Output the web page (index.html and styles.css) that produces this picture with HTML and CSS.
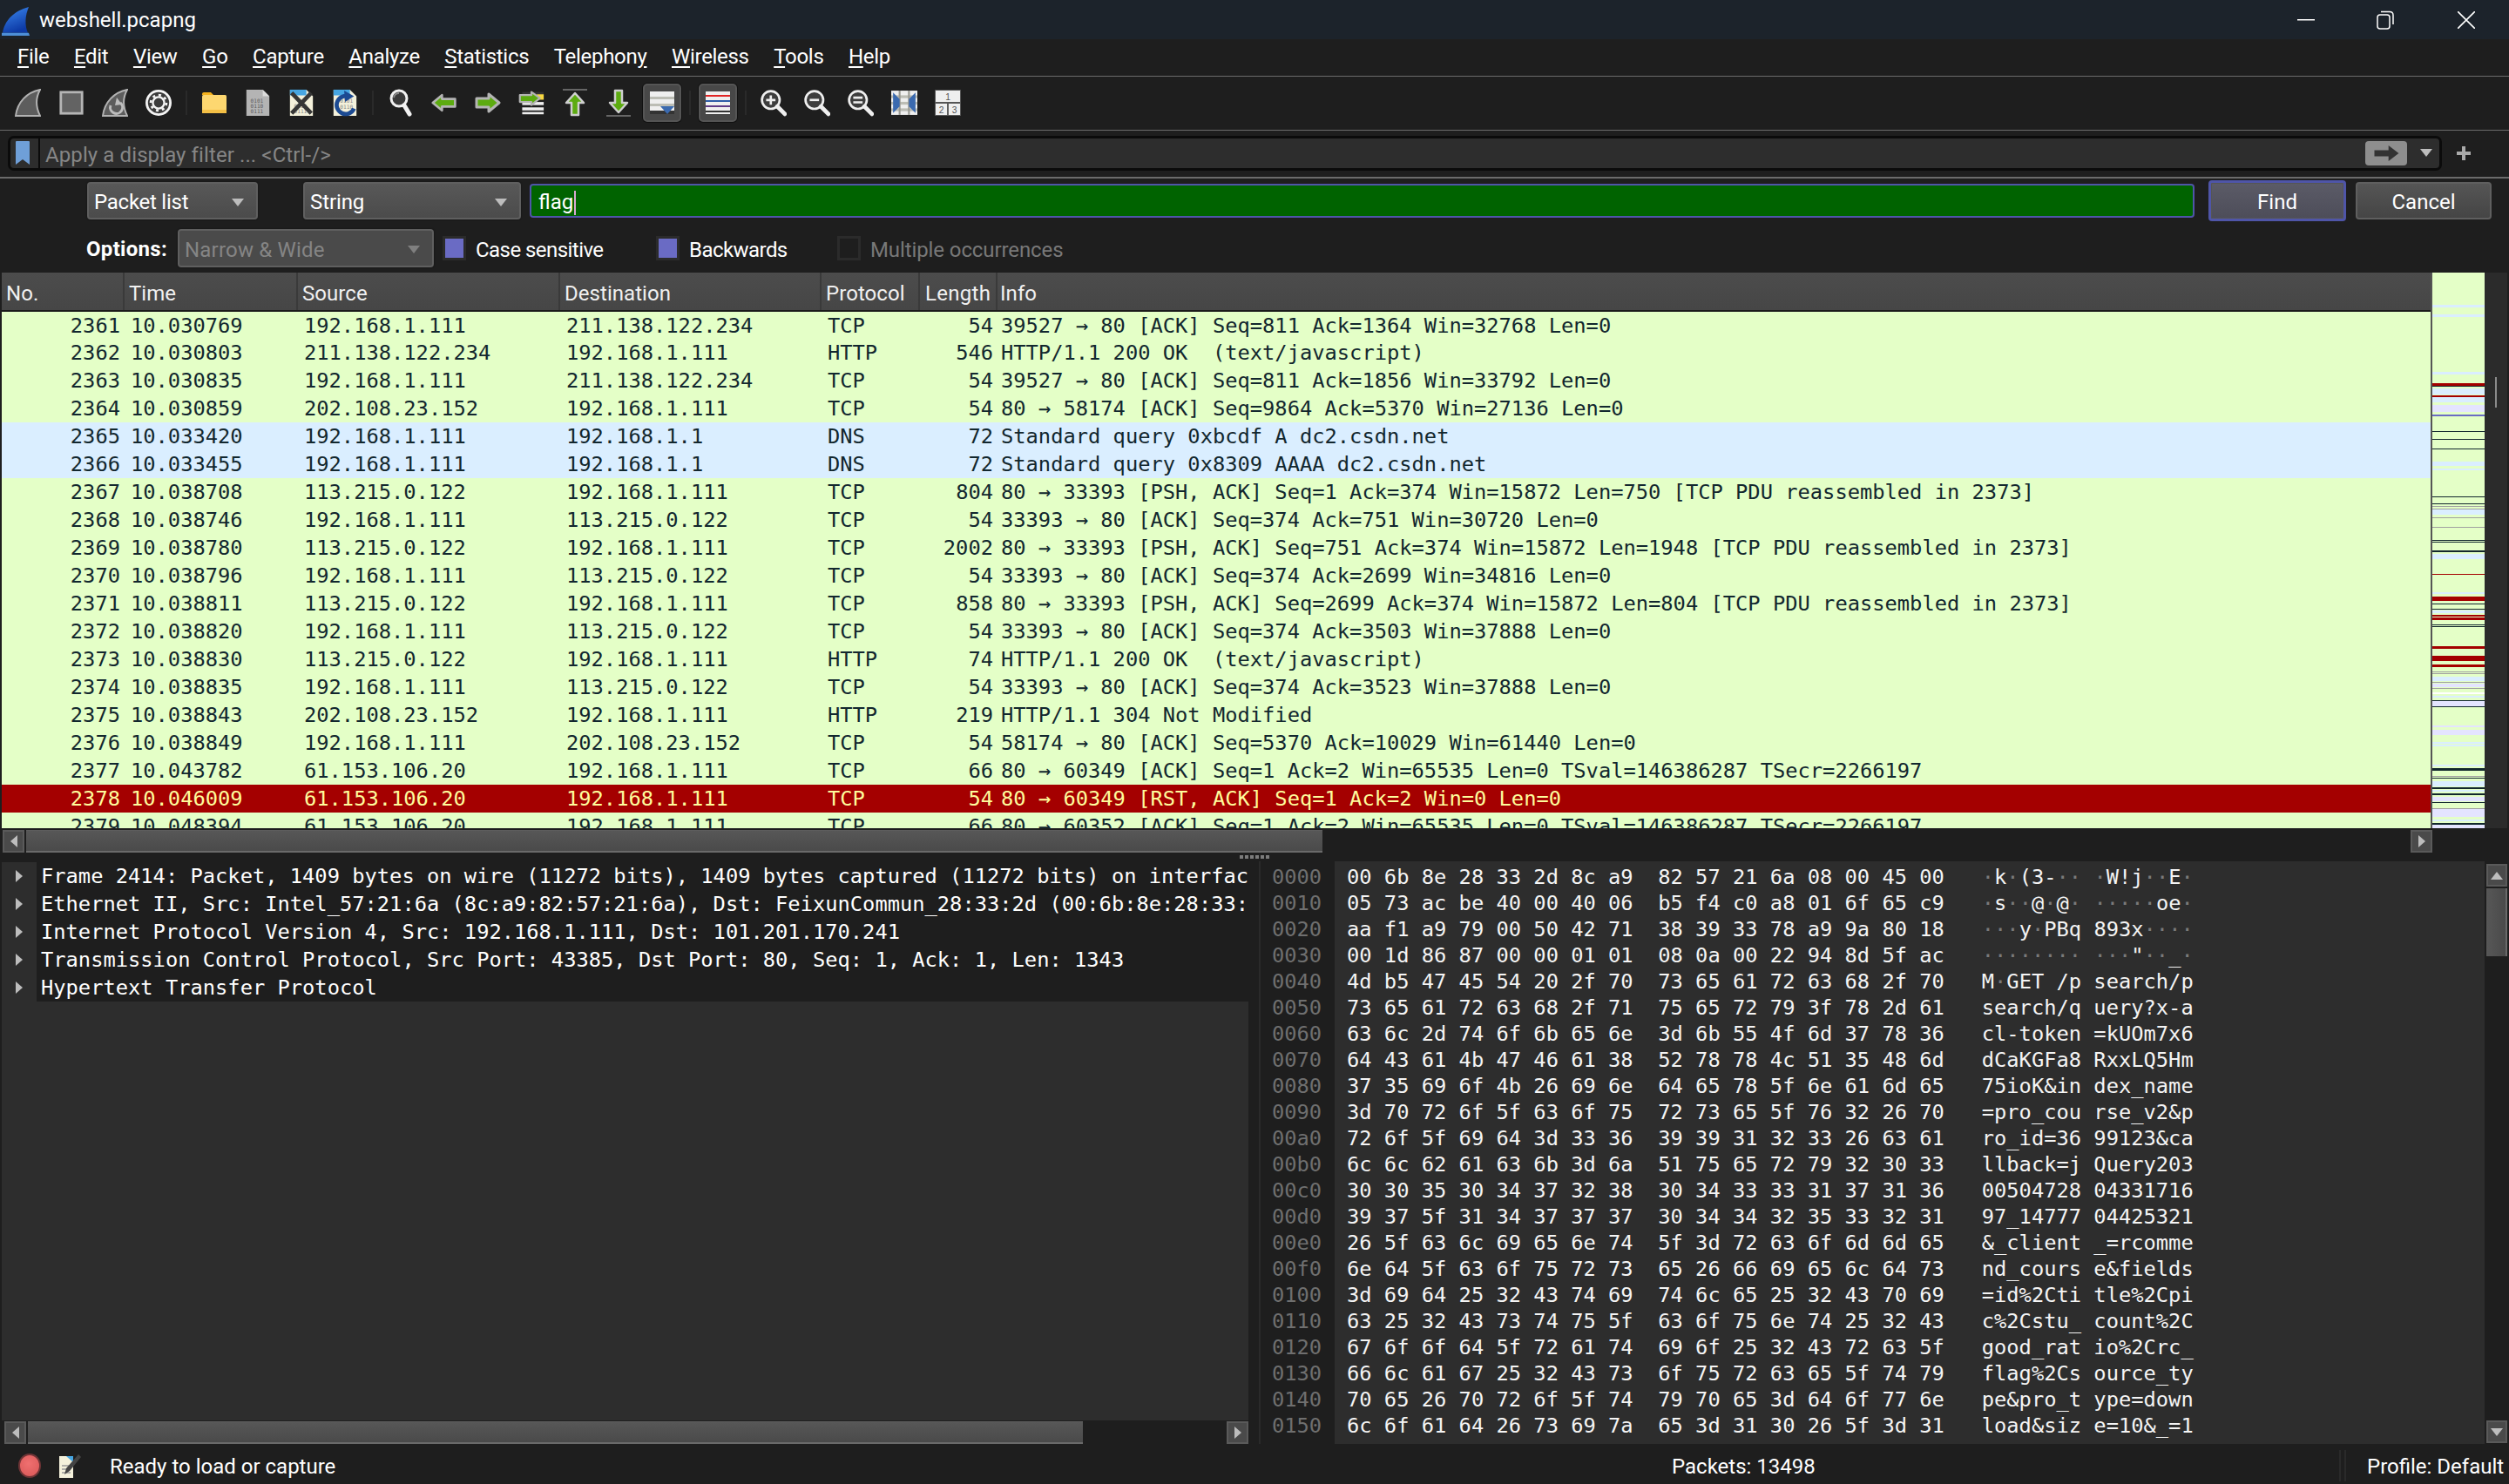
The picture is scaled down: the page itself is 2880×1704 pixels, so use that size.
FILE: index.html
```html
<!DOCTYPE html>
<html lang="en">
<head>
<meta charset="utf-8">
<title>webshell.pcapng</title>
<link rel="stylesheet" href="styles.css">
</head>
<body>
<div class="app">

<header class="titlebar">
  <svg class="logo" viewBox="0 0 32 31" preserveAspectRatio="none"><defs><linearGradient id="lg" x1="0" y1="0" x2="0.4" y2="1"><stop offset="0" stop-color="#3d8bf0"/><stop offset="1" stop-color="#0d3aa6"/></linearGradient></defs><path d="M1 28C3 15 14 4 31 0C27 9 26 19 30 28Z" fill="url(#lg)"/><path d="M0 28H31L32 31H0Z" fill="#4d8fd8"/></svg>
  <span class="title">webshell.pcapng</span>
  <div class="winctl">
    <svg class="wmin" viewBox="0 0 20 2"><rect width="20" height="1.5" fill="#fff"/></svg>
    <svg class="wmax" viewBox="0 0 20 22"><rect x="1" y="5" width="14" height="16" rx="3" fill="none" stroke="#fff" stroke-width="1.5"/><path d="M5 1.5H15Q19 1.5 19 5.500V16" fill="none" stroke="#fff" stroke-width="1.500"/></svg>
    <svg class="wclose" viewBox="0 0 20 20"><path d="M0 0L20 20M20 0L0 20" stroke="#fff" stroke-width="1.600"/></svg>
  </div>
</header>

<nav class="menubar">
  <span class="mi"><u>F</u>ile</span><span class="mi"><u>E</u>dit</span><span class="mi"><u>V</u>iew</span><span class="mi"><u>G</u>o</span><span class="mi"><u>C</u>apture</span><span class="mi"><u>A</u>nalyze</span><span class="mi"><u>S</u>tatistics</span><span class="mi">Telephon<u>y</u></span><span class="mi"><u>W</u>ireless</span><span class="mi"><u>T</u>ools</span><span class="mi"><u>H</u>elp</span>
</nav>

<div class="toolbar">
  <span class="slot"><svg class="ic" viewBox="1 1 30 32"><path d="M2 32C4 16 15 5 30 2C25 11 25 22 30 32Z" fill="#5d5d5d" stroke="#b2b2b2" stroke-width="2"/></svg></span>
  <span class="slot"><svg class="ic" viewBox="0 0 32 34"><rect x="3" y="4" width="26" height="26" fill="#636363" stroke="#b5b5b5" stroke-width="3"/></svg></span>
  <span class="slot"><svg class="ic" viewBox="1 1 30 32"><path d="M2 32C4 16 15 5 30 2C25 11 25 22 30 32Z" fill="#5d5d5d" stroke="#b2b2b2" stroke-width="2"/><path d="M11 20A7 7 0 1 0 22 17" fill="none" stroke="#bdbdbd" stroke-width="3"/><path d="M18 11L24 19L16 20Z" fill="#bdbdbd"/></svg></span>
  <span class="slot"><svg class="ic" viewBox="0 0 32 34"><circle cx="16" cy="17" r="14.500" fill="#3c3c3c" stroke="#f4f4f4" stroke-width="3"/><circle cx="16" cy="17" r="7" fill="none" stroke="#f4f4f4" stroke-width="2.500"/><circle cx="16" cy="17" r="9.500" fill="none" stroke="#f4f4f4" stroke-width="3" stroke-dasharray="3.200 4.200"/></svg></span>
  <span class="sep"></span>
  <span class="slot"><svg class="ic" viewBox="0 0 30 26"><path d="M1 3Q1 1 3 1H11L14 4H1Z" fill="#f6b21c"/><rect x="1" y="4" width="28" height="21" rx="1.500" fill="#fdd770"/><rect x="1" y="21" width="28" height="4" fill="#f3bf45"/></svg></span>
  <span class="slot"><svg class="ic" viewBox="0 0 30 34"><path d="M1 1H21L29 9V33H1Z" fill="#b4b4b4"/><path d="M21 1V9H29Z" fill="#dcdcdc"/><text class="bin" x="6" y="17" fill="#5e5e5e">0101</text><text class="bin" x="6" y="23.500" fill="#5e5e5e">0110</text><text class="bin" x="6" y="30" fill="#5e5e5e">0111</text></svg></span>
  <span class="slot"><svg class="ic" viewBox="0 0 30 34"><path d="M1 1H21L29 9V33H1Z" fill="#f4f1db"/><path d="M1 1H21V8H1Z" fill="#47a6e2"/><text class="bin" x="6" y="23" fill="#888">0110</text><text class="bin" x="6" y="30" fill="#888">0111</text><path d="M3 5L27 30M27 5L3 30" stroke="#363636" stroke-width="5"/></svg></span>
  <span class="slot"><svg class="ic" viewBox="0 0 30 34"><path d="M1 1H21L29 9V33H1Z" fill="#f4f1db"/><path d="M1 1H21V8H1Z" fill="#47a6e2"/><text class="bin" x="9" y="17" fill="#888">0101</text><text class="bin" x="9" y="24" fill="#888">0110</text><path d="M21 10A11 11 0 1 0 26 24" fill="none" stroke="#1c4a92" stroke-width="5"/><path d="M14 2L26 9L15 16Z" fill="#1c4a92"/></svg></span>
  <span class="sep"></span>
  <span class="slot"><svg class="ic" viewBox="0 0 26 32"><circle cx="11" cy="11" r="9" fill="#3a3a3a" stroke="#f2f2f2" stroke-width="3"/><path d="M5 10A6 6 0 0 1 11 5" fill="none" stroke="#8a8a8a" stroke-width="2"/><path d="M17 19L23 29" stroke="#f2f2f2" stroke-width="5" stroke-linecap="round"/></svg></span>
  <span class="slot"><svg class="ic" viewBox="0 0 34 26"><path d="M2 13L14 3V8H31V18H14V23Z" fill="#5cab10" stroke="#b4b4b4" stroke-width="3" stroke-linejoin="round"/></svg></span>
  <span class="slot"><svg class="ic" viewBox="0 0 30 26"><path d="M28 13L16 3V8H2V18H16V23Z" fill="#5cab10" stroke="#b4b4b4" stroke-width="3" stroke-linejoin="round"/></svg></span>
  <span class="slot"><svg class="ic" viewBox="0 0 34 32"><rect x="5" y="2" width="28" height="10" fill="#333"/><rect x="24" y="5" width="9" height="7" fill="#f8d840"/><rect x="5" y="15" width="28" height="4" fill="#eee"/><rect x="5" y="22" width="28" height="4" fill="#eee"/><rect x="5" y="28" width="28" height="3" fill="#eee"/><path d="M28 10L17 2V6H2V15H17V19Z" fill="#5cab10" stroke="#b4b4b4" stroke-width="2.500" stroke-linejoin="round"/></svg></span>
  <span class="slot"><svg class="ic" viewBox="0 0 30 32"><rect x="1" y="0" width="28" height="2" fill="#666"/><path d="M15 5L25 16H19V30H11V16H5Z" fill="#5cab10" stroke="#cfcfcf" stroke-width="2.500" stroke-linejoin="round"/></svg></span>
  <span class="slot"><svg class="ic" viewBox="0 0 30 32"><rect x="1" y="30" width="28" height="2" fill="#666"/><path d="M15 27L25 16H19V2H11V16H5Z" fill="#5cab10" stroke="#cfcfcf" stroke-width="2.500" stroke-linejoin="round"/></svg></span>
  <span class="slot on"><svg class="ic" viewBox="0 0 28 26"><rect width="28" height="26" fill="#efefef"/><rect y="6" width="28" height="3" fill="#bcbdb5"/><rect y="14" width="28" height="3" fill="#bcbdb5"/><rect y="22" width="28" height="4" fill="#333"/><path d="M12 17H28L20 26Z" fill="#3b6aaf"/></svg></span>
  <span class="sep"></span>
  <span class="slot on"><svg class="ic" viewBox="0 0 28 26"><rect width="28" height="26" fill="#efefef"/><rect y="4" width="28" height="2" fill="#e02424"/><rect y="10" width="28" height="2" fill="#2d5ca8"/><rect y="16" width="28" height="2" fill="#5e3a86"/><rect y="22" width="28" height="2" fill="#333"/></svg></span>
  <span class="sep"></span>
  <span class="slot"><svg class="ic" viewBox="0 0 28 28"><circle cx="11" cy="11" r="9.500" fill="#3d3d3d" stroke="#efefef" stroke-width="2.500"/><path d="M6 11H16M11 6V16" stroke="#efefef" stroke-width="2.500"/><path d="M18 18L26 26" stroke="#efefef" stroke-width="4.500" stroke-linecap="round"/></svg></span>
  <span class="slot"><svg class="ic" viewBox="0 0 28 28"><circle cx="11" cy="11" r="9.500" fill="#3d3d3d" stroke="#efefef" stroke-width="2.500"/><path d="M6 11H16" stroke="#efefef" stroke-width="2.500"/><path d="M18 18L26 26" stroke="#efefef" stroke-width="4.500" stroke-linecap="round"/></svg></span>
  <span class="slot"><svg class="ic" viewBox="0 0 28 28"><circle cx="11" cy="11" r="9.500" fill="#3d3d3d" stroke="#efefef" stroke-width="2.500"/><path d="M6 8.500H16M6 13.500H16" stroke="#efefef" stroke-width="2.500"/><path d="M18 18L26 26" stroke="#efefef" stroke-width="4.500" stroke-linecap="round"/></svg></span>
  <span class="slot"><svg class="ic" viewBox="0 0 28 26"><rect width="28" height="26" fill="#efefef"/><rect y="5" width="28" height="3" fill="#bcbdb5"/><rect y="12" width="28" height="3" fill="#bcbdb5"/><rect y="19" width="28" height="3" fill="#bcbdb5"/><rect x="8" width="2" height="26" fill="#9a9a93"/><rect x="18" width="2" height="26" fill="#9a9a93"/><path d="M2 2L9 9V17L2 24ZM26 2L19 9V17L26 24Z" fill="#3b6aaf"/></svg></span>
  <span class="slot"><svg class="ic" viewBox="0 0 32 32"><rect x="0.500" y="0.500" width="31" height="31" fill="#efefef" stroke="#555"/><path d="M0 16H32M16 16V32" stroke="#555" stroke-width="2"/><text class="lay" x="16" y="12.500">1</text><text class="lay" x="8" y="28.500">2</text><text class="lay" x="24" y="28.500">3</text></svg></span>
</div>

<div class="filterrow">
  <div class="filterbox">
    <svg class="bookmark" viewBox="0 0 16 28"><path d="M0 1Q0 0 1 0H15Q16 0 16 1V27L8 21L0 27Z" fill="#6f9fd8"/></svg>
    <span class="placeholder">Apply a display filter ... &lt;Ctrl-/&gt;</span>
    <span class="applybtn"><svg class="applyic" viewBox="0 0 34 20"><path d="M2 6H20V0L33 10L20 20V14H2Z" fill="#333"/></svg></span>
    <span class="tri small"></span>
  </div>
  <svg class="plus" viewBox="0 0 16 16"><path d="M8 0V16M0 8H16" stroke="#aaa" stroke-width="4"/></svg>
</div>

<section class="findbar">
  <div class="findrow">
    <div class="combo c1">Packet list<span class="tri"></span></div>
    <div class="combo c2">String<span class="tri"></span></div>
    <div class="field">flag<span class="caret"></span></div>
    <button class="btn find">Find</button>
    <button class="btn cancel">Cancel</button>
  </div>
  <div class="optrow">
    <b class="optlabel">Options:</b>
    <div class="combo c3 dis">Narrow &amp; Wide<span class="tri"></span></div>
    <span class="check on"></span><span class="chklabel lab1">Case sensitive</span>
    <span class="check on"></span><span class="chklabel lab2">Backwards</span>
    <span class="check"></span><span class="chklabel dimmed">Multiple occurrences</span>
  </div>
</section>

<section class="toppane">
  <div class="plist">
    <table class="ptable">
      <colgroup><col class="w-no"><col class="w-time"><col class="w-src"><col class="w-dst"><col class="w-proto"><col class="w-len"><col></colgroup>
      <thead><tr><th>No.</th><th>Time</th><th>Source</th><th>Destination</th><th>Protocol</th><th>Length</th><th>Info</th></tr></thead>
      <tbody>
        <tr><td class="r">2361</td><td>10.030769</td><td>192.168.1.111</td><td>211.138.122.234</td><td>TCP</td><td class="r">54</td><td>39527 → 80 [ACK] Seq=811 Ack=1364 Win=32768 Len=0</td></tr>
        <tr><td class="r">2362</td><td>10.030803</td><td>211.138.122.234</td><td>192.168.1.111</td><td>HTTP</td><td class="r">546</td><td>HTTP/1.1 200 OK  (text/javascript)</td></tr>
        <tr><td class="r">2363</td><td>10.030835</td><td>192.168.1.111</td><td>211.138.122.234</td><td>TCP</td><td class="r">54</td><td>39527 → 80 [ACK] Seq=811 Ack=1856 Win=33792 Len=0</td></tr>
        <tr><td class="r">2364</td><td>10.030859</td><td>202.108.23.152</td><td>192.168.1.111</td><td>TCP</td><td class="r">54</td><td>80 → 58174 [ACK] Seq=9864 Ack=5370 Win=27136 Len=0</td></tr>
        <tr class="dns"><td class="r">2365</td><td>10.033420</td><td>192.168.1.111</td><td>192.168.1.1</td><td>DNS</td><td class="r">72</td><td>Standard query 0xbcdf A dc2.csdn.net</td></tr>
        <tr class="dns"><td class="r">2366</td><td>10.033455</td><td>192.168.1.111</td><td>192.168.1.1</td><td>DNS</td><td class="r">72</td><td>Standard query 0x8309 AAAA dc2.csdn.net</td></tr>
        <tr><td class="r">2367</td><td>10.038708</td><td>113.215.0.122</td><td>192.168.1.111</td><td>TCP</td><td class="r">804</td><td>80 → 33393 [PSH, ACK] Seq=1 Ack=374 Win=15872 Len=750 [TCP PDU reassembled in 2373]</td></tr>
        <tr><td class="r">2368</td><td>10.038746</td><td>192.168.1.111</td><td>113.215.0.122</td><td>TCP</td><td class="r">54</td><td>33393 → 80 [ACK] Seq=374 Ack=751 Win=30720 Len=0</td></tr>
        <tr><td class="r">2369</td><td>10.038780</td><td>113.215.0.122</td><td>192.168.1.111</td><td>TCP</td><td class="r">2002</td><td>80 → 33393 [PSH, ACK] Seq=751 Ack=374 Win=15872 Len=1948 [TCP PDU reassembled in 2373]</td></tr>
        <tr><td class="r">2370</td><td>10.038796</td><td>192.168.1.111</td><td>113.215.0.122</td><td>TCP</td><td class="r">54</td><td>33393 → 80 [ACK] Seq=374 Ack=2699 Win=34816 Len=0</td></tr>
        <tr><td class="r">2371</td><td>10.038811</td><td>113.215.0.122</td><td>192.168.1.111</td><td>TCP</td><td class="r">858</td><td>80 → 33393 [PSH, ACK] Seq=2699 Ack=374 Win=15872 Len=804 [TCP PDU reassembled in 2373]</td></tr>
        <tr><td class="r">2372</td><td>10.038820</td><td>192.168.1.111</td><td>113.215.0.122</td><td>TCP</td><td class="r">54</td><td>33393 → 80 [ACK] Seq=374 Ack=3503 Win=37888 Len=0</td></tr>
        <tr><td class="r">2373</td><td>10.038830</td><td>113.215.0.122</td><td>192.168.1.111</td><td>HTTP</td><td class="r">74</td><td>HTTP/1.1 200 OK  (text/javascript)</td></tr>
        <tr><td class="r">2374</td><td>10.038835</td><td>192.168.1.111</td><td>113.215.0.122</td><td>TCP</td><td class="r">54</td><td>33393 → 80 [ACK] Seq=374 Ack=3523 Win=37888 Len=0</td></tr>
        <tr><td class="r">2375</td><td>10.038843</td><td>202.108.23.152</td><td>192.168.1.111</td><td>HTTP</td><td class="r">219</td><td>HTTP/1.1 304 Not Modified</td></tr>
        <tr><td class="r">2376</td><td>10.038849</td><td>192.168.1.111</td><td>202.108.23.152</td><td>TCP</td><td class="r">54</td><td>58174 → 80 [ACK] Seq=5370 Ack=10029 Win=61440 Len=0</td></tr>
        <tr><td class="r">2377</td><td>10.043782</td><td>61.153.106.20</td><td>192.168.1.111</td><td>TCP</td><td class="r">66</td><td>80 → 60349 [ACK] Seq=1 Ack=2 Win=65535 Len=0 TSval=146386287 TSecr=2266197</td></tr>
        <tr class="rst"><td class="r">2378</td><td>10.046009</td><td>61.153.106.20</td><td>192.168.1.111</td><td>TCP</td><td class="r">54</td><td>80 → 60349 [RST, ACK] Seq=1 Ack=2 Win=0 Len=0</td></tr>
        <tr><td class="r">2379</td><td>10.048394</td><td>61.153.106.20</td><td>192.168.1.111</td><td>TCP</td><td class="r">66</td><td>80 → 60352 [ACK] Seq=1 Ack=2 Win=65535 Len=0 TSval=146386287 TSecr=2266197</td></tr>
      </tbody>
    </table>
  </div>
  <svg class="minimap" viewBox="0 0 60 638" preserveAspectRatio="none">
    <rect width="60" height="638" class="mbg"/>
    <g class="mb"><rect y="37" width="60" height="3"/><rect y="48" width="60" height="3"/><rect y="114" width="60" height="3"/><rect y="133" width="60" height="7"/><rect y="143" width="60" height="6"/><rect y="217" width="60" height="5"/><rect y="225" width="60" height="2"/><rect y="272" width="60" height="6"/><rect y="323" width="60" height="6"/><rect y="367" width="60" height="2"/><rect y="388" width="60" height="3"/><rect y="464" width="60" height="5"/><rect y="486" width="60" height="2"/><rect y="539" width="60" height="2"/><rect y="542" width="60" height="2"/><rect y="565" width="60" height="2"/><rect y="584" width="60" height="6"/><rect y="594" width="60" height="2"/><rect y="628" width="60" height="2"/></g>
    <g class="ml"><rect y="152" width="60" height="8"/><rect y="472" width="60" height="4"/><rect y="491" width="60" height="7"/><rect y="520" width="60" height="2"/><rect y="525" width="60" height="6"/><rect y="602" width="60" height="5"/><rect y="616" width="60" height="9"/><rect y="634" width="60" height="4"/></g>
    <g class="mr"><rect y="127" width="60" height="2"/><rect y="129" width="60" height="1"/><rect y="141" width="60" height="2"/><rect y="346" width="60" height="1"/><rect y="372" width="60" height="3"/><rect y="375" width="60" height="2"/><rect y="393" width="60" height="2"/><rect y="396" width="60" height="3"/><rect y="429" width="60" height="3"/><rect y="440" width="60" height="6"/><rect y="450" width="60" height="3"/></g>
    <g class="md"><rect y="130" width="60" height="1"/><rect y="182" width="60" height="1"/><rect y="191" width="60" height="1"/><rect y="202" width="60" height="1"/><rect y="257" width="60" height="1"/><rect y="265" width="60" height="1"/><rect y="307" width="60" height="1"/><rect y="309" width="60" height="1"/><rect y="319" width="60" height="2"/><rect y="380" width="60" height="1"/><rect y="386" width="60" height="1"/><rect y="404" width="60" height="1"/><rect y="406" width="60" height="1"/><rect y="491" width="60" height="1"/><rect y="498" width="60" height="1"/><rect y="569" width="60" height="3"/><rect y="580" width="60" height="1"/><rect y="591" width="60" height="2"/><rect y="598" width="60" height="2"/><rect y="608" width="60" height="1"/><rect y="632" width="60" height="2"/></g>
    <g class="mg"><rect y="268" width="60" height="1"/><rect y="271" width="60" height="1"/><rect y="281" width="60" height="1"/><rect y="292" width="60" height="1"/><rect y="458" width="60" height="1"/><rect y="460" width="60" height="1"/><rect y="470" width="60" height="1"/><rect y="477" width="60" height="1"/><rect y="578" width="60" height="1"/><rect y="615" width="60" height="1"/></g>
    <rect y="163" width="60" height="2" class="mp"/>
    <rect y="482" width="60" height="2" class="mw"/>
  </svg>
  <div class="vscroll"><span class="vmark"></span></div>
</section>

<div class="hbar hbar-top">
  <span class="sbtn"><i class="tl"></i></span>
  <span class="thumb t1"></span>
  <span class="sbtn"><i class="tr"></i></span>
</div>

<div class="splitter"><span class="dots"></span></div>

<section class="bottom">
  <div class="treepane">
    <div class="tree">
      <div class="trow"><span class="gut"><i class="tr"></i></span>Frame 2414: Packet, 1409 bytes on wire (11272 bits), 1409 bytes captured (11272 bits) on interfac</div>
      <div class="trow"><span class="gut"><i class="tr"></i></span>Ethernet II, Src: Intel_57:21:6a (8c:a9:82:57:21:6a), Dst: FeixunCommun_28:33:2d (00:6b:8e:28:33:</div>
      <div class="trow"><span class="gut"><i class="tr"></i></span>Internet Protocol Version 4, Src: 192.168.1.111, Dst: 101.201.170.241</div>
      <div class="trow"><span class="gut"><i class="tr"></i></span>Transmission Control Protocol, Src Port: 43385, Dst Port: 80, Seq: 1, Ack: 1, Len: 1343</div>
      <div class="trow"><span class="gut"><i class="tr"></i></span>Hypertext Transfer Protocol</div>
    </div>
    <div class="treeempty"></div>
    <div class="hbar">
      <span class="sbtn"><i class="tl"></i></span>
      <span class="thumb t2"></span>
      <span class="sbtn"><i class="tr"></i></span>
    </div>
  </div>
  <div class="hexpane">
    <div class="offs">
      <div>0000</div><div>0010</div><div>0020</div><div>0030</div><div>0040</div><div>0050</div><div>0060</div><div>0070</div><div>0080</div><div>0090</div><div>00a0</div><div>00b0</div><div>00c0</div><div>00d0</div><div>00e0</div><div>00f0</div><div>0100</div><div>0110</div><div>0120</div><div>0130</div><div>0140</div><div>0150</div>
    </div>
    <div class="hex">
      <div>00 6b 8e 28 33 2d 8c a9  82 57 21 6a 08 00 45 00   <i>·</i>k<i>·</i>(3-<i>··</i> <i>·</i>W!j<i>··</i>E<i>·</i></div>
      <div>05 73 ac be 40 00 40 06  b5 f4 c0 a8 01 6f 65 c9   <i>·</i>s<i>··</i>@<i>·</i>@<i>·</i> <i>·····</i>oe<i>·</i></div>
      <div>aa f1 a9 79 00 50 42 71  38 39 33 78 a9 9a 80 18   <i>···</i>y<i>·</i>PBq 893x<i>····</i></div>
      <div>00 1d 86 87 00 00 01 01  08 0a 00 22 94 8d 5f ac   <i>········</i> <i>···</i>"<i>··</i>_<i>·</i></div>
      <div>4d b5 47 45 54 20 2f 70  73 65 61 72 63 68 2f 70   M<i>·</i>GET /p search/p</div>
      <div>73 65 61 72 63 68 2f 71  75 65 72 79 3f 78 2d 61   search/q uery?x-a</div>
      <div>63 6c 2d 74 6f 6b 65 6e  3d 6b 55 4f 6d 37 78 36   cl-token =kUOm7x6</div>
      <div>64 43 61 4b 47 46 61 38  52 78 78 4c 51 35 48 6d   dCaKGFa8 RxxLQ5Hm</div>
      <div>37 35 69 6f 4b 26 69 6e  64 65 78 5f 6e 61 6d 65   75ioK&amp;in dex_name</div>
      <div>3d 70 72 6f 5f 63 6f 75  72 73 65 5f 76 32 26 70   =pro_cou rse_v2&amp;p</div>
      <div>72 6f 5f 69 64 3d 33 36  39 39 31 32 33 26 63 61   ro_id=36 99123&amp;ca</div>
      <div>6c 6c 62 61 63 6b 3d 6a  51 75 65 72 79 32 30 33   llback=j Query203</div>
      <div>30 30 35 30 34 37 32 38  30 34 33 33 31 37 31 36   00504728 04331716</div>
      <div>39 37 5f 31 34 37 37 37  30 34 34 32 35 33 32 31   97_14777 04425321</div>
      <div>26 5f 63 6c 69 65 6e 74  5f 3d 72 63 6f 6d 6d 65   &amp;_client _=rcomme</div>
      <div>6e 64 5f 63 6f 75 72 73  65 26 66 69 65 6c 64 73   nd_cours e&amp;fields</div>
      <div>3d 69 64 25 32 43 74 69  74 6c 65 25 32 43 70 69   =id%2Cti tle%2Cpi</div>
      <div>63 25 32 43 73 74 75 5f  63 6f 75 6e 74 25 32 43   c%2Cstu_ count%2C</div>
      <div>67 6f 6f 64 5f 72 61 74  69 6f 25 32 43 72 63 5f   good_rat io%2Crc_</div>
      <div>66 6c 61 67 25 32 43 73  6f 75 72 63 65 5f 74 79   flag%2Cs ource_ty</div>
      <div>70 65 26 70 72 6f 5f 74  79 70 65 3d 64 6f 77 6e   pe&amp;pro_t ype=down</div>
      <div>6c 6f 61 64 26 73 69 7a  65 3d 31 30 26 5f 3d 31   load&amp;siz e=10&amp;_=1</div>
    </div>
    <div class="vbar">
      <span class="vbtn"><i class="tu"></i></span>
      <span class="vthumb"></span>
      <span class="vspace"></span>
      <span class="vbtn"><i class="td"></i></span>
    </div>
  </div>
</section>

<footer class="statusbar">
  <span class="dot"></span>
  <svg class="editic" viewBox="0 0 26 28"><path d="M1 3H17V28H1Z" fill="#f4f1db"/><path d="M9 3H17V10Z" fill="#47a6e2"/><path d="M4 14H12M4 18H12M4 22H14" stroke="#999" stroke-width="1.500"/><path d="M23 1L26 4L13 20L7 24L9 17Z" fill="#444"/></svg>
  <span class="st-main">Ready to load or capture</span>
  <span class="st-pk">Packets: 13498</span>
  <span class="st-sep"></span>
  <span class="st-prof">Profile: Default</span>
</footer>

</div>
</body>
</html>
```
FILE: styles.css
```css
* { box-sizing: border-box; }
html, body { margin: 0; padding: 0; background: #1e1e1e; }
.app {
  width: 2880px; height: 1704px; overflow: hidden; display: flex; flex-direction: column;
  background: #1e1e1e; color: #fff;
  font-family: Roboto, "Noto Sans", sans-serif; font-size: 24px;
}

/* title */
.titlebar { height: 45px; background: #1c232b; display: flex; align-items: center; padding-left: 2px; }
.logo { width: 32px; height: 33px; margin-top: 3px; }
.title { margin-left: 11px; font-size: 24px; }
.winctl { margin-left: auto; display: flex; align-items: center; padding-right: 39px; }
.wmin { width: 20px; height: 2px; margin-right: 71px; }
.wmax { width: 20px; height: 22px; margin-right: 73px; }
.wclose { width: 20px; height: 20px; }

/* menu */
.menubar { height: 43px; display: flex; align-items: center; gap: 28.500px; padding: 0 0 2px 20px; border-bottom: 1px solid #6b6b6b; letter-spacing: -0.3px; }
.mi { color: #fff; white-space: nowrap; }
.mi u { text-underline-offset: 3px; }

/* toolbar */
.toolbar { height: 62px; display: flex; align-items: center; padding: 0 0 2px 7px; border-bottom: 1px solid #6b6b6b; }
.slot { width: 50px; height: 42px; display: flex; align-items: center; justify-content: center; flex: none; }
.slot.on .ic { width: 28px; height: 26px; }
.slot.on { position: relative; }
.slot.on::before { content: ""; position: absolute; left: 3px; right: 3px; top: -1px; bottom: -1px; background: #484848; border: 2px solid #555; border-radius: 5px; box-shadow: 0 0 0 1px #111; }
.slot.on .ic { position: relative; }
.sep { width: 14px; height: 36px; flex: none; position: relative; }
.sep::after { content: ""; position: absolute; left: 6px; top: 4px; bottom: 4px; width: 2px; background: #2a2a2a; }
.ic { width: 30px; height: 32px; display: block; }
.bin { font-family: "DejaVu Sans Mono", monospace; font-size: 6.500px; }
.lay { font-family: "Liberation Sans", sans-serif; font-size: 11px; fill: #555; text-anchor: middle; }

/* filter */
.filterrow { height: 55px; display: flex; align-items: center; padding: 0 0 2px 9px; border-bottom: 2px solid #6b6b6b; }
.filterbox { width: 2794px; height: 40px; background: #2d2d2d; border: 3px solid #0b0b0b; border-radius: 7px; display: flex; align-items: center; padding-left: 6px; }
.bookmark { width: 16px; height: 28px; flex: none; }
.placeholder { margin-left: 10px; padding-left: 6px; height: 34px; line-height: 39px; border-left: 2px solid #0b0b0b; color: #868686; font-size: 24px; letter-spacing: 0.1px; }
.applybtn { margin-left: auto; width: 48px; height: 28px; background: #8e8e8e; border-radius: 4px; display: flex; align-items: center; justify-content: center; }
.applyic { width: 32px; height: 18px; }
.tri { position: absolute; right: 14px; top: 17px; width: 0; height: 0; border-left: 7px solid transparent; border-right: 7px solid transparent; border-top: 9px solid #bdbdbd; }
.filterbox .tri { position: static; margin: 0 8px 0 15px; }
.plus { width: 16px; height: 16px; margin-left: 17px; }

/* find bar */
.findbar { height: 108px; display: flex; flex-direction: column; flex: none; }
.findrow { height: 51px; display: flex; align-items: center; padding: 0 20px 0 100px; }
.combo { position: relative; height: 43px; line-height: 43px; background: linear-gradient(#585858, #4b4b4b); border: 2px solid #5f5f5f; border-radius: 4px; padding-left: 6px; color: #fff; box-shadow: 0 0 2px #111; flex: none; letter-spacing: -0.1px; }
.c1 { width: 196px; letter-spacing: -0.25px; }
.c2 { width: 250px; margin-left: 52px; }
.c3 { width: 294px; height: 44px; line-height: 44px; letter-spacing: 0.2px; }
.combo.dis { color: #858585; background: #4a4a4a; }
.combo.dis .tri { border-top-color: #7f7f7f; }
.field { margin-left: 10px; flex: 1; height: 39px; line-height: 38px; background: #006300; border: 2px solid #4f55a8; border-radius: 4px; padding-left: 8px; }
.caret { display: inline-block; width: 2px; height: 28px; background: #d9a8d0; vertical-align: -7px; margin-left: 1px; }
.btn { height: 43px; font: inherit; color: #fff; border-radius: 4px; padding: 3px 0 0; flex: none; }
.find { width: 158px; height: 47px; margin-left: 16px; background: linear-gradient(#5b5b67, #4d4d59); border: 3px solid #4f55a8; box-shadow: inset 0 0 0 1px #555; }
.cancel { width: 156px; margin-left: 11px; background: linear-gradient(#555, #454545); border: 2px solid #5f5f5f; }
.optrow { height: 57px; display: flex; align-items: center; padding: 0 0 0 99px; }
.optlabel { width: 105px; font-weight: 700; padding-top: 3px; letter-spacing: 0.3px; }
.check { width: 27px; height: 28px; background: #1e1e1e; border: 3px solid #2b2b2b; flex: none; }
.check.on { background: #6a6bc4; }
.chklabel { margin-left: 11px; color: #fff; padding-top: 4px; letter-spacing: -0.55px; }
.c3 + .check { margin-left: 10px; }
.lab1 { width: 207px; }
.lab2 { width: 170px; }
.dimmed { color: #787878; letter-spacing: -0.1px; }

/* packet list */
.toppane { height: 638px; display: flex; padding-left: 2px; padding-right: 2px; flex: none; }
.plist { width: 2790px; overflow: hidden; background: #e4ffc7; border-right: 2px solid #555; }
.ptable { width: 2788px; border-collapse: collapse; table-layout: fixed; font-family: "DejaVu Sans Mono", monospace; font-size: 23.740px; color: #12272e; white-space: pre; }
.w-no { width: 140px; } .w-time { width: 199px; } .w-src { width: 301px; } .w-dst { width: 300px; } .w-proto { width: 113px; } .w-len { width: 89px; }
.ptable th { height: 44px; padding: 5px 0 0 5px; text-align: left; font-family: Roboto, "Noto Sans", sans-serif; font-size: 24px; font-weight: 400; color: #f0f0f0; background: linear-gradient(#4c4c4c, #464646); border-right: 2px solid #3a3a3a; border-bottom: 2px solid #1b1b1b; letter-spacing: 0.05px; }
.ptable th:last-child { padding-left: 3px; border-right: 0; }
.ptable th:nth-child(6) { padding-left: 6px; letter-spacing: 0.3px; }
.ptable td { height: 32px; padding: 0 0 0 8px; overflow: hidden; }
.ptable td:last-child { padding-left: 5px; }
.ptable td.r { text-align: right; padding: 0 4px 0 0; }
.dns td { background: #daeeff; }
.rst td { background: #a40000; color: #fffc9c; }
.minimap { width: 60px; height: 638px; flex: none; display: block; shape-rendering: crispEdges; }
.mbg { fill: #e4ffc7; }
.mb { fill: #daeeff; } .ml { fill: #e4e4ff; } .mr { fill: #a40000; } .md { fill: #12272e; } .mg { fill: #a0a0a0; } .mp { fill: #6a6bc4; } .mw { fill: #ffffff; }
.vscroll { width: 26px; flex: none; background: #2b2b2b; position: relative; }
.vmark { position: absolute; left: 12px; top: 120px; width: 2px; height: 35px; background: #8a8a8a; }

/* scrollbars */
.hbar { height: 26px; display: flex; gap: 2px; padding-left: 3px; flex: none; margin-top: 1px; }
.hbar-top { width: 2792px; margin-top: 2px; }
.sbtn { width: 25px; height: 26px; background: #4a4a4a; border: 2px solid #5a5a5a; flex: none; display: flex; align-items: center; justify-content: center; }
.hbar .sbtn:last-child { margin-left: auto; }
.thumb { height: 26px; background: linear-gradient(#575757, #4a4a4a); border-top: 1px solid #5e5e5e; border-bottom: 2px solid #6a6a6a; flex: none; }
.t1 { width: 1488px; }
.t2 { width: 1211px; }
.tl, .tr, .tu, .td { display: block; width: 0; height: 0; flex: none; }
.tl { border-top: 7px solid transparent; border-bottom: 7px solid transparent; border-right: 8px solid #bdbdbd; }
.tr { border-top: 7px solid transparent; border-bottom: 7px solid transparent; border-left: 8px solid #bdbdbd; }
.tu { border-left: 7px solid transparent; border-right: 7px solid transparent; border-bottom: 9px solid #bdbdbd; }
.td { border-left: 7px solid transparent; border-right: 7px solid transparent; border-top: 9px solid #bdbdbd; }

.splitter { height: 10px; display: flex; justify-content: center; align-items: center; flex: none; }
.dots { width: 34px; height: 4px; background: repeating-linear-gradient(90deg, #7c7c7c 0 4px, transparent 4px 6px); }

/* bottom panes */
.bottom { height: 669px; display: flex; padding-left: 2px; flex: none; }
.treepane { width: 1431px; display: flex; flex-direction: column; flex: none; }
.tree { font-family: "DejaVu Sans Mono", monospace; font-size: 23.740px; flex: none; padding-top: 1px; background: #1e1e1e; overflow: hidden; }
.trow { height: 32px; line-height: 33px; white-space: nowrap; display: flex; overflow: hidden; }
.gut { width: 45px; flex: none; background: #2d2d2d; display: flex; align-items: center; padding-left: 16px; border-right: 5px solid #1e1e1e; }
.treeempty { flex: 1; background: #2d2d2d; }
.hexpane { margin-left: 12px; flex: 1; display: flex; font-family: "DejaVu Sans Mono", monospace; font-size: 23.740px; line-height: 30px; min-width: 0; }
.offs { width: 87px; padding: 3px 0 0 13px; color: #6f6f6f; flex: none; background: #1e1e1e; border-left: 2px solid #2a2a2a; }
.hex { flex: 1; padding: 3px 0 0 14px; background: #2d2d2d; color: #f4f4f4; }
.hex div { height: 30px; white-space: pre; }
.hex i { font-style: normal; color: #7a7a7a; }
.vbar { width: 28px; flex: none; display: flex; flex-direction: column; gap: 2px; background: #1e1e1e; padding: 3px 2px 0; height: 668px; }
.vbtn { height: 26px; flex: none; background: #4a4a4a; border: 2px solid #5a5a5a; display: flex; align-items: center; justify-content: center; }
.vthumb { height: 78px; flex: none; background: linear-gradient(90deg, #575757, #4a4a4a); border-right: 2px solid #6a6a6a; }
.vspace { flex: 1; }

/* status */
.statusbar { height: 45px; display: flex; align-items: center; padding: 4px 0 0 21px; flex: none; }
.dot { width: 26px; height: 28px; border-radius: 50%; background: radial-gradient(circle at 45% 40%, #ef7070, #d85656); border: 2px solid #6f3436; flex: none; }
.editic { width: 26px; height: 28px; margin-left: 20px; flex: none; }
.st-main { margin-left: 33px; width: 1793px; flex: none; white-space: nowrap; padding-top: 2px; }
.st-pk { flex: none; width: 766px; white-space: nowrap; padding-top: 2px; }
.st-sep { width: 8px; height: 36px; border-left: 2px solid #2a2a2a; border-right: 2px solid #2a2a2a; flex: none; }
.st-prof { margin-left: 24px; white-space: nowrap; padding-top: 2px; }
```
